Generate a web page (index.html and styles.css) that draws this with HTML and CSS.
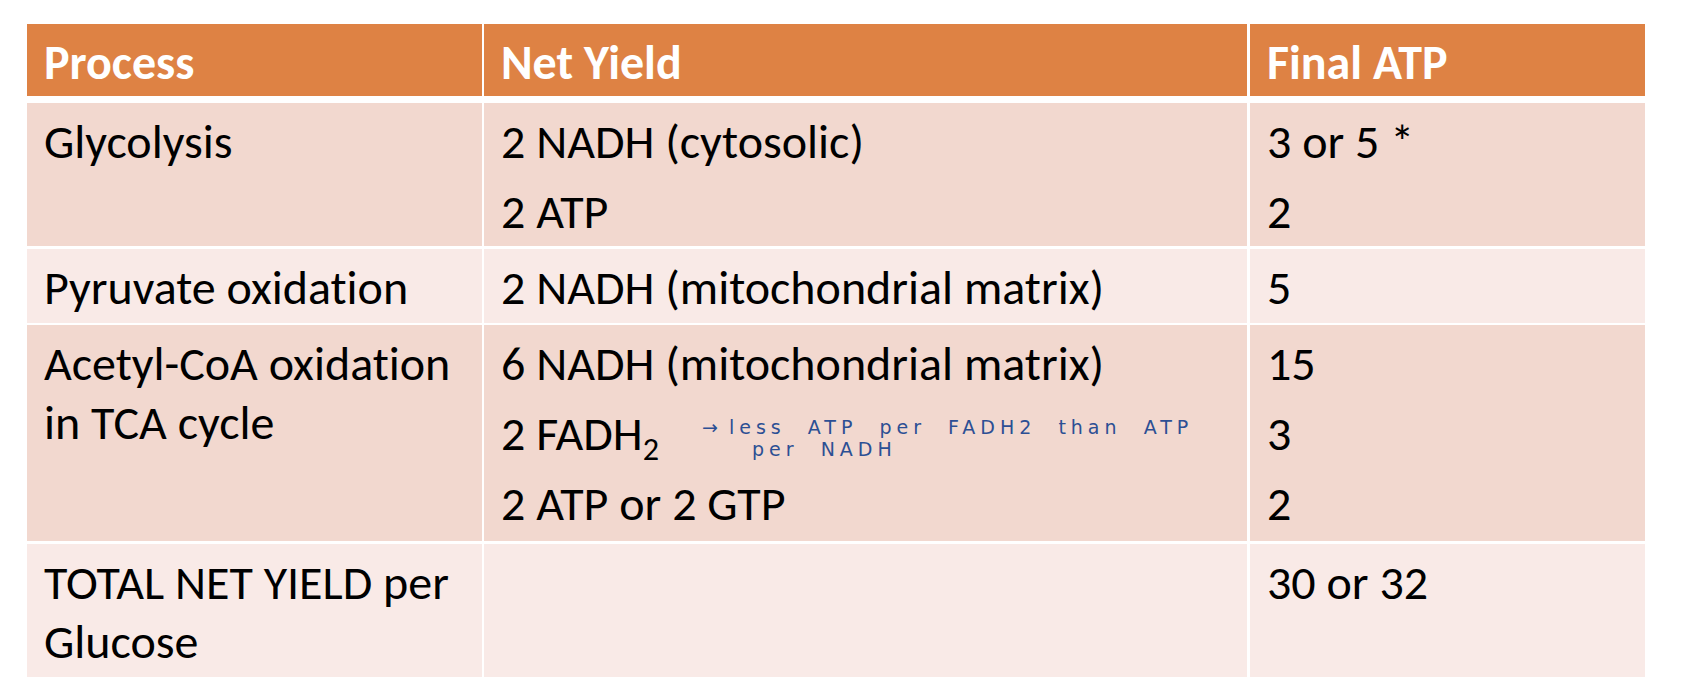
FILE: index.html
```html
<!DOCTYPE html>
<html lang="en">
<head>
<meta charset="utf-8">
<title>ATP yield per glucose</title>
<link rel="stylesheet" href="styles.css">
</head>
<body>
<div class="table">
  <div class="row head">
    <div class="cell c1">Process</div>
    <div class="cell c2">Net Yield</div>
    <div class="cell c3">Final ATP</div>
  </div>
  <div class="row dark r1">
    <div class="cell c1"><p>Glycolysis</p></div>
    <div class="cell c2"><p>2 NADH (cytosolic)</p><p class="next">2 ATP</p></div>
    <div class="cell c3"><p>3 or 5 *</p><p class="next">2</p></div>
  </div>
  <div class="row light r2">
    <div class="cell c1"><p>Pyruvate oxidation</p></div>
    <div class="cell c2"><p>2 NADH (mitochondrial matrix)</p></div>
    <div class="cell c3"><p>5</p></div>
  </div>
  <div class="row dark r3">
    <div class="cell c1"><p>Acetyl-CoA oxidation in TCA cycle</p></div>
    <div class="cell c2 annotated">
      <p>6 NADH (mitochondrial matrix)</p>
      <p class="next">2 FADH<sub>2</sub></p>
      <p class="next">2 ATP or 2 GTP</p>
      <div class="ink">
        <span class="ink-line"><span class="arrow">→</span> less &nbsp;ATP &nbsp;per &nbsp;FADH2 &nbsp;than &nbsp;ATP</span>
        <span class="ink-line second">per &nbsp;NADH</span>
      </div>
    </div>
    <div class="cell c3"><p>15</p><p class="next">3</p><p class="next">2</p></div>
  </div>
  <div class="row light r4">
    <div class="cell c1"><p>TOTAL NET YIELD per Glucose</p></div>
    <div class="cell c2"></div>
    <div class="cell c3"><p>30 or 32</p></div>
  </div>
</div>
</body>
</html>
```

FILE: styles.css
```css
html, body {
  margin: 0;
  padding: 0;
  background: #ffffff;
}

body {
  width: 1688px;
  height: 692px;
  overflow: hidden;
  font-family: "Carlito", "Lato", "Liberation Sans", sans-serif;
  font-variant-ligatures: none;
  color: #000000;
}

.table {
  display: flex;
  flex-direction: column;
  width: 1618px;
  margin: 24px 0 0 27px;
}

.row {
  display: flex;
}

.head {
  height: 72px;
}

.head .cell {
  background: #de8244;
  color: #ffffff;
  font-weight: 700;
}

.r1 { height: 143px; margin-top: 7px; }
.r2 { height: 74px; margin-top: 3px; }
.r3 { height: 216px; margin-top: 2px; }
.r4 { height: 133px; margin-top: 3px; }

.dark .cell { background: #f2d8cf; }
.light .cell { background: #f9eae7; }

.cell {
  box-sizing: border-box;
  padding: 10px 16px 0 17px;
  font-size: 48px;
  line-height: 58.6px;
}

.c1 { width: 455px; }
.c2 { width: 763px; margin-left: 2px; }
.c3 { width: 395px; margin-left: 3px; }

.cell p {
  margin: 0;
}

.cell p.next {
  margin-top: 11.4px;
}

.cell sub {
  font-size: 0.67em;
  line-height: 0;
  vertical-align: -0.3em;
}

.annotated {
  position: relative;
}

.ink {
  position: absolute;
  left: 218px;
  top: 91px;
  display: flex;
  flex-direction: column;
  color: #2c4f94;
  font-family: "DejaVu Sans", sans-serif;
  font-size: 19px;
  line-height: 22px;
  letter-spacing: 5px;
  white-space: nowrap;
}

.ink-line.second {
  margin-left: 50px;
}

.arrow {
  letter-spacing: 0;
}
```
